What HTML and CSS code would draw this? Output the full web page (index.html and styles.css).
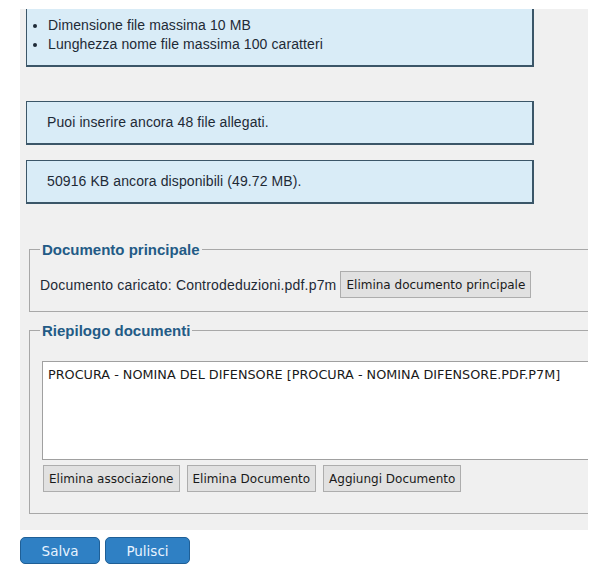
FILE: index.html
```html
<!DOCTYPE html>
<html lang="it">
<head>
  <meta charset="UTF-8" />
  <title>Allegati</title>
  <link rel="stylesheet" href="styles.css">
</head>
<body>
<div class="panel">
  <div class="info info-rules">
    <ul>
      <li>Dimensione file massima 10 MB</li>
      <li>Lunghezza nome file massima 100 caratteri</li>
    </ul>
  </div>

  <div class="info info-count">Puoi inserire ancora 48 file allegati.</div>
  <div class="info">50916 KB ancora disponibili (49.72 MB).</div>

  <fieldset class="group group-main">
    <legend>Documento principale</legend>
    <div class="row">
      <span>Documento caricato: Controdeduzioni.pdf.p7m</span>
      <button type="button" class="btn">Elimina documento principale</button>
    </div>
  </fieldset>

  <fieldset class="group group-list">
    <legend>Riepilogo documenti</legend>
    <div class="doc-list">
      <div class="doc-item">PROCURA - NOMINA DEL DIFENSORE [PROCURA - NOMINA DIFENSORE.PDF.P7M]</div>
    </div>
    <div class="actions">
      <button type="button" class="btn">Elimina associazione</button>
      <button type="button" class="btn">Elimina Documento</button>
      <button type="button" class="btn">Aggiungi Documento</button>
    </div>
  </fieldset>
</div>

<div class="form-buttons">
  <button type="button" class="btn-primary btn-save">Salva</button>
  <button type="button" class="btn-primary btn-clear">Pulisci</button>
</div>
</body>
</html>
```

FILE: styles.css
```css
body {
    margin: 0;
    padding: 9px 8px 0 20px;
    background-color: #ffffff;
    font-family: "Liberation Sans", Arial, sans-serif;
    font-size: 14px;
    color: #1e2a36;
}

.panel {
    width: 568px;
    height: 521px;
    background-color: #f0f0f0;
    box-sizing: border-box;
    padding: 0 0 0 6px;
    overflow: hidden;
}

.info {
    width: 508px;
    box-sizing: border-box;
    background-color: #d9ecf7;
    border: 2px solid #3b5668;
    border-width: 1px 2px 2px 1px;
    padding: 12px 20px 0;
    height: 44px;
    margin-top: 15px;
    letter-spacing: 0.1px;
}

/* the list box is scrolled, its top edge sits above the panel */
.info-rules {
    margin-top: 0;
    height: 58px;
    border-top: none;
    padding: 7px 20px 0 0;
}

.info-rules ul {
    margin: 0;
    padding-left: 21px;
    line-height: 19px;
}

.info-count {
    margin-top: 34px;
}

/* fieldsets run past the right edge of the panel */
.group {
    margin: 0 -40px 0 3px;
    padding: 0 10px;
    border: 1px solid #a8a8a8;
}

.group legend {
    padding: 0 2px;
    margin-left: 0;
    font-weight: bold;
    font-size: 15px;
    color: #235b86;
}

.group-main {
    margin-top: 37px;
    padding-top: 13px;
    padding-bottom: 13px;
}

.group-main .row span {
    letter-spacing: 0.18px;
}

.group-list {
    margin-top: 10px;
    padding-top: 22px;
    padding-bottom: 21px;
    padding-left: 12px;
}

.group-list legend {
    margin-left: -2px;
}

.row {
    display: flex;
    align-items: center;
    gap: 4px;
}

.btn {
    font-family: "DejaVu Sans", Tahoma, sans-serif;
    font-size: 12px;
    color: #1a1a1a;
    background-color: #e1e1e1;
    border: 1px solid #adadad;
    height: 27px;
    padding: 0 5px;
    margin: 0;
}

.doc-list {
    height: 99px;
    box-sizing: border-box;
    background-color: #ffffff;
    border: 1px solid #a0a0a0;
    padding: 5px 5px;
}

.doc-item {
    font-family: "DejaVu Sans", Tahoma, sans-serif;
    font-size: 12.8px;
    color: #1a1a1a;
}

.actions {
    display: flex;
    gap: 7px;
    margin-top: 5px;
    padding-left: 1px;
}

.form-buttons {
    display: flex;
    gap: 5px;
    margin-top: 7px;
}

.btn-primary {
    font-family: "DejaVu Sans", Tahoma, sans-serif;
    font-size: 13.5px;
    color: #e8f3ff;
    background-color: #2f80c4;
    border: 1px solid #1f5f96;
    border-radius: 5px;
    height: 27px;
    margin: 0;
}

.btn-save {
    width: 80px;
}

.btn-clear {
    width: 85px;
}
```
